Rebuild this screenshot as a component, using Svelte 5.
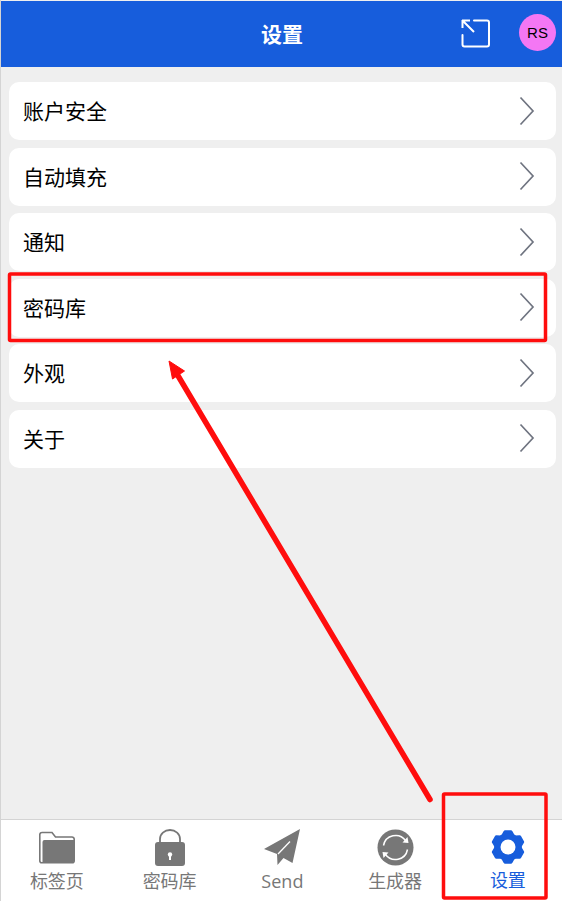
<script>
    const rows = ["账户安全", "自动填充", "通知", "密码库", "外观", "关于"];

    // six rounded teeth around the centre of the gear icon
    const polar = (r, deg) => {
        const a = (deg * Math.PI) / 180;
        return `${(18 + r * Math.cos(a)).toFixed(2)} ${(18 + r * Math.sin(a)).toFixed(2)}`;
    };
    const teeth = [0, 1, 2, 3, 4, 5].map((i) => {
        const c = -90 + i * 60;
        return `L${polar(12.5, c - 24)}L${polar(15.5, c - 11)}L${polar(15.5, c + 11)}L${polar(12.5, c + 24)}`;
    });
    const gear = "M" + teeth.join("").slice(1) + "Z";
</script>

<div class="page">
    <header class="top">
        <div class="title">设置</div>
        <svg class="popout" width="32" height="32" viewBox="0 0 32 32" fill="none" stroke="#fff" stroke-width="2">
            <path d="M14 2.500h13a2 2 0 0 1 2 2v22a2 2 0 0 1-2 2H4.500a2 2 0 0 1-2-2V17" stroke-linecap="round" />
            <path d="M14 14L2.500 2.500M2 2.500h8M2.500 2v8" />
        </svg>
        <div class="avatar">RS</div>
    </header>

    <main class="list">
        {#each rows as row}
            <div class="row">
                <span>{row}</span>
                <svg width="16" height="30" viewBox="0 0 16 30" fill="none" stroke="#6f7480" stroke-width="1.7">
                    <path d="M1.500 1.500L14 15L1.500 28.500" />
                </svg>
            </div>
        {/each}
    </main>

    <nav class="tabs">
        <div class="tab">
            <svg width="36" height="37" viewBox="0 0 36 37">
                <path d="M2.500 3.500h10.500l3.500 4.500H33a2.200 2.200 0 0 1 2.200 2.200v21.600a2 2 0 0 1-2 2H2.800a2 2 0 0 1-2-2V5.500a2 2 0 0 1 2-2z" fill="#fff" stroke="#777" stroke-width="1.600" />
                <path d="M3.500 13a2 2 0 0 1 2-2H35v20.500a2.500 2.500 0 0 1-2.500 2.500h-29z" fill="#777" />
            </svg>
            <span>标签页</span>
        </div>
        <div class="tab">
            <svg width="30" height="37" viewBox="0 0 30 37">
                <path d="M5 15V10a10 9 0 0 1 20 0v5" fill="none" stroke="#777" stroke-width="1.800" />
                <path d="M3 13h24a3 3 0 0 1 3 3v18a3 3 0 0 1-3 3H3a3 3 0 0 1-3-3V16a3 3 0 0 1 3-3z" fill="#777" />
                <circle cx="15" cy="25.500" r="2.200" fill="#fff" />
                <rect x="14" y="26" width="2" height="5" fill="#fff" />
            </svg>
            <span>密码库</span>
        </div>
        <div class="tab">
            <svg width="36" height="37" viewBox="0 0 36 37">
                <path d="M36 0L28.500 34 19.500 29 13.500 36 13 25 0 20z" fill="#777" />
                <path d="M26 12.500L14 25" fill="none" stroke="#fff" stroke-width="1.300" />
            </svg>
            <span>Send</span>
        </div>
        <div class="tab">
            <svg width="37" height="37" viewBox="0 0 37 37">
                <circle cx="18.500" cy="18.500" r="18" fill="#777" />
                <g fill="none" stroke="#fff" stroke-width="1.500">
                    <path d="M6.500 16.500A12.300 12.300 0 0 1 28.500 11.500" />
                    <path d="M30.500 20.500A12.300 12.300 0 0 1 8.500 25.500" />
                </g>
                <path d="M25.500 13.500L31.500 14 30.500 8z" fill="#fff" />
                <path d="M11.500 23.500L5.500 23 6.500 29z" fill="#fff" />
            </svg>
            <span>生成器</span>
        </div>
        <div class="tab active">
            <svg width="36" height="36" viewBox="0 0 36 36">
                <path d={gear} fill="#175ddc" stroke="#175ddc" stroke-width="3" stroke-linejoin="round" />
                <circle cx="18" cy="18" r="7.500" fill="#fff" />
            </svg>
            <span>设置</span>
        </div>
    </nav>

    <!-- annotation drawn over the screenshot -->
    <svg class="marks" width="562" height="901" viewBox="0 0 562 901" fill="none" stroke="#ff0d0d" stroke-width="3.500">
        <rect x="9.500" y="274" width="536" height="66.500" rx="1" />
        <rect x="443.500" y="794" width="102.500" height="104" rx="1" />
        <path d="M430 799.500L174 369" stroke-width="5.500" stroke-linecap="round" />
        <path d="M169 361L184.500 371 172.500 379z" fill="#ff0d0d" stroke-width="1" />
    </svg>
</div>

<style>
    :global(body) {
        margin: 0;
        background: #efefef;
    }

    .page {
        position: relative;
        width: 562px;
        height: 901px;
        box-sizing: border-box;
        padding-top: 1px;
        display: flex;
        flex-direction: column;
        overflow: hidden;
        background: #efefef;
        border-left: 1px solid #d4d4d4;
        font-family: "Open Sans", "Noto Sans CJK SC", sans-serif;
    }

    .top {
        height: 66px;
        flex: none;
        background: #175ddc;
        margin-left: -1px;
        display: flex;
        align-items: center;
        justify-content: center;
        position: relative;
    }

    .title {
        color: white;
        font-size: 21px;
        font-weight: 700;
        margin-left: 2px;
        margin-top: -3px;
    }

    .popout {
        position: absolute;
        left: 460px;
        top: 17px;
    }

    .avatar {
        position: absolute;
        left: 519px;
        top: 13px;
        width: 37px;
        height: 37px;
        border-radius: 50%;
        background: #f477f4;
        color: black;
        font-family: "Liberation Sans", sans-serif;
        font-size: 15px;
        display: flex;
        align-items: center;
        justify-content: center;
    }

    .list {
        flex: 1;
        padding: 15px 6px 0 8px;
        display: flex;
        flex-direction: column;
        gap: 7.6px;
    }

    .row {
        height: 58px;
        flex: none;
        background: white;
        border-radius: 10px;
        padding: 0 21px 0 14px;
        display: flex;
        align-items: center;
        justify-content: space-between;
        color: black;
        font-size: 21px;
    }

    .row span {
        margin-top: -2px;
    }

    .row svg {
        margin-top: -1px;
    }

    .tabs {
        height: 82px;
        flex: none;
        box-sizing: border-box;
        background: white;
        border-top: 1px solid #d4d4d4;
        display: grid;
        grid-template-columns: repeat(5, 112.75px);
        margin-left: -0.5px;
        padding: 9px 0 0 0;
    }

    .tab {
        display: flex;
        flex-direction: column;
        align-items: center;
        color: #777;
        font-size: 18px;
        line-height: 24px;
    }

    .tab svg {
        flex: none;
    }

    .tab span {
        margin-top: 3px;
    }

    .active {
        color: #175ddc;
    }

    .marks {
        position: absolute;
        left: -1px;
        top: 0;
        pointer-events: none;
    }
</style>
